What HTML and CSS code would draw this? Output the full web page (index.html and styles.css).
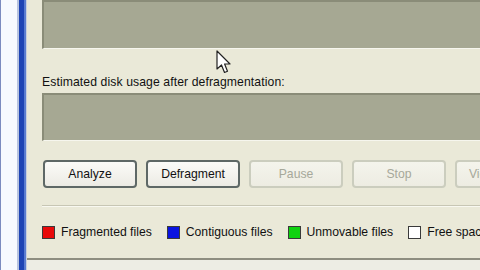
FILE: index.html
```html
<!DOCTYPE html>
<html>
<head>
<meta charset="utf-8">
<link rel="stylesheet" href="styles.css">
</head>
<body>
<div class="screen">
  <div class="edge"></div>
  <div class="window">
    <div class="panel">
      <div class="display top"></div>
      <div class="label">Estimated disk usage after defragmentation:</div>
      <div class="display"></div>
      <div class="buttons">
        <button class="btn">Analyze</button>
        <button class="btn">Defragment</button>
        <button class="btn off">Pause</button>
        <button class="btn off">Stop</button>
        <button class="btn off">View Report</button>
      </div>
      <div class="sep"></div>
      <div class="legend">
        <div class="item"><span class="sw red"></span>Fragmented files</div>
        <div class="item"><span class="sw blue"></span>Contiguous files</div>
        <div class="item"><span class="sw green"></span>Unmovable files</div>
        <div class="item"><span class="sw white"></span>Free space</div>
      </div>
    </div>
    <div class="status"></div>
  </div>
  <svg class="cursor" width="15" height="26" viewBox="0 0 15 26">
    <path d="M1 1 L1 19 L5.5 15 L8.5 22.5 L11.5 21.3 L8.6 14 L14 14 Z" fill="#fff" stroke="#222" stroke-width="1.2" stroke-linejoin="round"/>
  </svg>
</div>
</body>
</html>
```
FILE: styles.css
```css
html, body {
  margin: 0;
  padding: 0;
  width: 480px;
  height: 270px;
  overflow: hidden;
  background: #ECEADB;
  font-family: "Liberation Sans", Arial, sans-serif;
}
.screen {
  position: relative;
  display: flex;
  width: 480px;
  height: 270px;
  overflow: hidden;
}
.edge {
  width: 27px;
  flex: none;
  background: linear-gradient(to right,
    #7C8CC0 0, #7C8CC0 1px,
    #F7FAFF 1px, #F7FAFF 17px,
    #B8C4E0 17px, #B8C4E0 19px,
    #1E44B4 19px, #1E44B4 24px,
    #5A7CD0 24px, #5A7CD0 26px,
    #C8D0E0 26px);
}
.window {
  flex: 1;
  min-width: 0;
  display: flex;
  flex-direction: column;
  background: #EAE9D8;
}
.panel {
  flex: 1;
  min-width: 0;
  padding: 0 0 0 15px;
  display: flex;
  flex-direction: column;
}
.display {
  height: 48px;
  background: #A6A893;
  border-top: 2px solid #8A8C78;
  border-left: 2px solid #8A8C78;
  border-bottom: 1px solid #F6F6EE;
  box-sizing: border-box;
}
.display.top {
  height: 49px;
}
.label {
  margin-top: 26px;
  height: 18px;
  font-size: 12.2px;
  color: #111;
  line-height: 14px;
  letter-spacing: 0.1px;
}
.buttons {
  display: flex;
  gap: 9px;
  margin-top: 19px;
  padding-left: 1px;
  overflow: hidden;
}
.btn {
  width: 94px;
  height: 28px;
  flex: none;
  border: 2px solid #5E6866;
  border-radius: 4px;
  background: linear-gradient(#FBFBF8, #ECEBE4);
  font-family: "Liberation Sans", Arial, sans-serif;
  font-size: 12.2px;
  color: #111;
  padding: 0;
}
.btn.off {
  border-color: #CBCDBE;
  color: #A6A89A;
  background: linear-gradient(#F4F4EC, #EDECE2);
}
.sep {
  margin-top: 17px;
  height: 1px;
  background: #C7C6B4;
  border-bottom: 1px solid #F8F8F0;
}
.legend {
  display: flex;
  align-items: center;
  margin-top: 18px;
  font-size: 12.2px;
  color: #111;
  overflow: hidden;
  white-space: nowrap;
}
.item {
  display: flex;
  align-items: center;
  flex: none;
  margin-right: 15px;
}
.sw {
  width: 11px;
  height: 11px;
  border: 1px solid #3A3A3A;
  margin-right: 6px;
}
.red { background: #E80A0A; }
.blue { background: #0A14E0; }
.green { background: #10D210; }
.white { background: #FFFFFF; }
.status {
  height: 10px;
  border-top: 2px solid #8E8E80;
  background: #EDEDE4;
}
.cursor {
  position: absolute;
  left: 216px;
  top: 50px;
}
```
